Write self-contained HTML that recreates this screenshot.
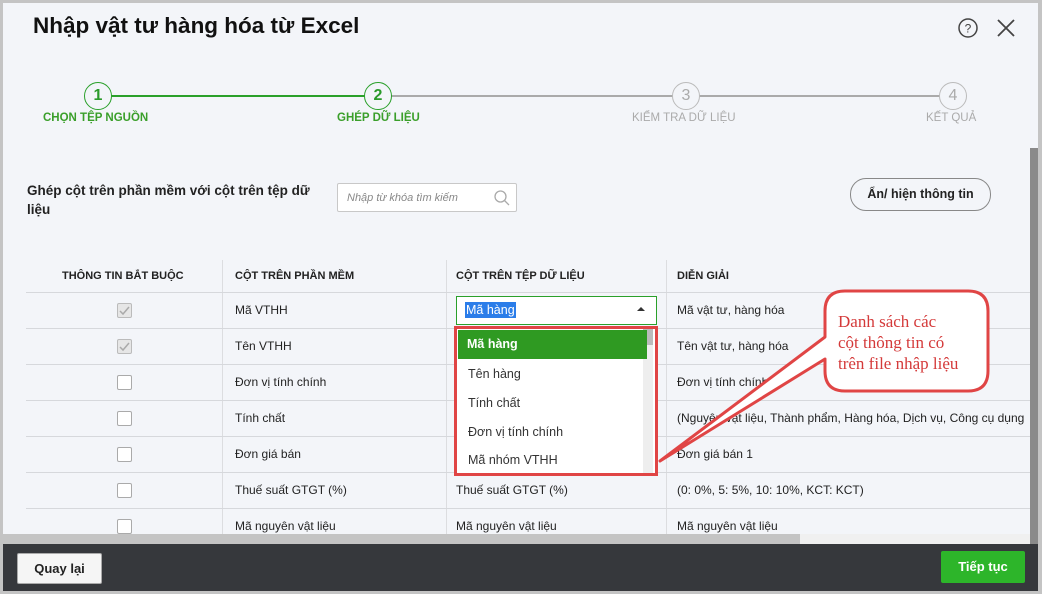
<!DOCTYPE html>
<html><head><meta charset="utf-8"><style>
*{box-sizing:border-box;margin:0;padding:0}
body{width:1042px;height:594px;overflow:hidden;background:#c4c4c4;font-family:"Liberation Sans",sans-serif;position:relative}
.a{position:absolute}
#dlg{position:absolute;left:3px;top:3px;width:1035px;height:588px;background:#f3f5f9;overflow:hidden}
.t{white-space:nowrap}
.cell{font-size:12px;color:#222}
.hd{font-size:11px;font-weight:bold;color:#222}
.hl{height:1px;background:#d6d8dc;left:23px;width:1004px}
.vl{width:1px;background:#dcdde0}
.cb{width:15px;height:15px;border:1px solid #aaa;background:#fff;border-radius:2px}
.cb.on{background:#e6e6e6;border-color:#bbb}
.circ{width:28px;height:28px;border-radius:50%;border:1.5px solid #2aa02a;background:#f3f5f9;font-size:16px;font-weight:bold;color:#2a9a2a;text-align:center;line-height:25px}
.circ.g{border-color:#bbb;color:#aaa;font-weight:normal}
.sl{font-size:11.5px;font-weight:bold;color:#3a9f2a}
.sl.g{color:#aaa;font-weight:normal}
.dd{font-size:12.5px;color:#333;left:4px;width:186px;height:29px;line-height:29px;padding-left:7px}
</style></head><body>
<div id="dlg">
<div class="a t" style="left:30px;top:10px;font-size:22.5px;font-weight:bold;color:#111">Nhập vật tư hàng hóa từ Excel</div>
<svg class="a" style="left:954px;top:14px" width="22" height="22"><circle cx="11" cy="11" r="9" fill="none" stroke="#444" stroke-width="1.5"/><text x="11" y="15.5" text-anchor="middle" font-size="12" font-family="Liberation Sans" fill="#444">?</text></svg>
<svg class="a" style="left:993px;top:15px" width="20" height="20"><path d="M2 2L18 18M18 2L2 18" stroke="#444" stroke-width="1.8"/></svg>
<!-- stepper -->
<div class="a" style="left:96px;top:92px;width:280px;height:2px;background:#2aa02a"></div>
<div class="a" style="left:376px;top:92px;width:575px;height:2px;background:#aaa"></div>
<div class="a circ" style="left:81px;top:79px">1</div>
<div class="a circ" style="left:361px;top:79px">2</div>
<div class="a circ g" style="left:669px;top:79px">3</div>
<div class="a circ g" style="left:936px;top:79px">4</div>
<div class="a t sl" style="left:40px;top:109px">CHỌN TỆP NGUỒN</div>
<div class="a t sl" style="left:334px;top:109px">GHÉP DỮ LIỆU</div>
<div class="a t sl g" style="left:629px;top:109px">KIỂM TRA DỮ LIỆU</div>
<div class="a t sl g" style="left:923px;top:109px">KẾT QUẢ</div>
<!-- toolbar -->
<div class="a" style="left:24px;top:178px;font-size:13.5px;font-weight:bold;color:#222;line-height:19px;width:300px">Ghép cột trên phần mềm với cột trên tệp dữ liệu</div>
<div class="a" style="left:334px;top:180px;width:180px;height:29px;border:1px solid #c8c8c8;background:#fff;border-radius:2px"></div>
<div class="a t" style="left:344px;top:189px;font-size:11px;font-style:italic;color:#888">Nhập từ khóa tìm kiếm</div>
<svg class="a" style="left:490px;top:186px" width="18" height="18"><circle cx="7.5" cy="7.5" r="5.5" fill="none" stroke="#aaa" stroke-width="1.3"/><path d="M11.5 11.5L16 16" stroke="#aaa" stroke-width="1.3"/></svg>
<div class="a" style="left:847px;top:175px;width:141px;height:33px;border:1px solid #888;border-radius:16px;text-align:center;line-height:31px;font-size:12.5px;font-weight:bold;color:#222">Ẩn/ hiện thông tin</div>
<!-- table -->
<div class="a vl" style="left:219px;top:257px;height:283px"></div>
<div class="a vl" style="left:443px;top:257px;height:283px"></div>
<div class="a vl" style="left:663px;top:257px;height:283px"></div>
<div class="a hl" style="top:289px"></div>
<div class="a hl" style="top:325px"></div>
<div class="a hl" style="top:361px"></div>
<div class="a hl" style="top:397px"></div>
<div class="a hl" style="top:433px"></div>
<div class="a hl" style="top:469px"></div>
<div class="a hl" style="top:505px"></div>
<div class="a t hd" style="left:59px;top:267px">THÔNG TIN BẮT BUỘC</div>
<div class="a t hd" style="left:232px;top:267px">CỘT TRÊN PHẦN MỀM</div>
<div class="a t hd" style="left:453px;top:267px">CỘT TRÊN TỆP DỮ LIỆU</div>
<div class="a t hd" style="left:674px;top:267px">DIỄN GIẢI</div>
<div class="a cb on" style="left:114px;top:300px"><svg width="13" height="13"><path d="M2 7L5 10L11 3" fill="none" stroke="#aaa" stroke-width="1.5"/></svg></div>
<div class="a cb on" style="left:114px;top:336px"><svg width="13" height="13"><path d="M2 7L5 10L11 3" fill="none" stroke="#aaa" stroke-width="1.5"/></svg></div>
<div class="a cb" style="left:114px;top:372px"></div>
<div class="a cb" style="left:114px;top:408px"></div>
<div class="a cb" style="left:114px;top:444px"></div>
<div class="a cb" style="left:114px;top:480px"></div>
<div class="a cb" style="left:114px;top:516px"></div>
<div class="a t cell" style="left:232px;top:300px">Mã VTHH</div>
<div class="a t cell" style="left:232px;top:336px">Tên VTHH</div>
<div class="a t cell" style="left:232px;top:372px">Đơn vị tính chính</div>
<div class="a t cell" style="left:232px;top:408px">Tính chất</div>
<div class="a t cell" style="left:232px;top:444px">Đơn giá bán</div>
<div class="a t cell" style="left:232px;top:480px">Thuế suất GTGT (%)</div>
<div class="a t cell" style="left:232px;top:516px">Mã nguyên vật liệu</div>
<div class="a t cell" style="left:453px;top:480px">Thuế suất GTGT (%)</div>
<div class="a t cell" style="left:453px;top:516px">Mã nguyên vật liệu</div>
<div class="a t cell" style="left:674px;top:300px">Mã vật tư, hàng hóa</div>
<div class="a t cell" style="left:674px;top:336px">Tên vật tư, hàng hóa</div>
<div class="a t cell" style="left:674px;top:372px">Đơn vị tính chính</div>
<div class="a t cell" style="left:674px;top:408px">(Nguyên vật liệu, Thành phẩm, Hàng hóa, Dịch vụ, Công cụ dụng</div>
<div class="a t cell" style="left:674px;top:444px">Đơn giá bán 1</div>
<div class="a t cell" style="left:674px;top:480px">(0: 0%, 5: 5%, 10: 10%, KCT: KCT)</div>
<div class="a t cell" style="left:674px;top:516px">Mã nguyên vật liệu</div>
<!-- combo -->
<div class="a" style="left:453px;top:293px;width:201px;height:29px;border:1.5px solid #2aa02a;background:#fff"></div>
<div class="a t" style="left:462px;top:299px;font-size:12.5px;color:#fff;background:#2b7de9;padding:0 1px;line-height:16px">Mã hàng</div>
<svg class="a" style="left:634px;top:303px" width="8" height="6"><path d="M0 5L4 1L8 5Z" fill="#333"/></svg>
<!-- dropdown -->
<div class="a" style="left:451px;top:323px;width:204px;height:150px;border:3px solid #e04545;background:#fff">
<div class="a" style="left:186px;top:0;width:10px;height:144px;background:#eee"></div>
<div class="a" style="left:186px;top:0;width:10px;height:16px;background:#bbb"></div>
<div class="a dd" style="top:1px;background:#2f9a22;color:#fff;font-weight:bold;left:1px;width:189px;padding-left:9px">Mã hàng</div>
<div class="a dd" style="top:31px">Tên hàng</div>
<div class="a dd" style="top:60px">Tính chất</div>
<div class="a dd" style="top:89px">Đơn vị tính chính</div>
<div class="a dd" style="top:117px">Mã nhóm VTHH</div>
</div>
<!-- callout -->
<svg class="a" style="left:0;top:0" width="1036" height="591">
<path d="M842 288 L965 288 Q985 288 985 308 L985 368 Q985 388 965 388 L842 388 Q822 388 822 368 L822 356 L657 458 L822 334 L822 308 Q822 288 842 288 Z" fill="#fff" stroke="#e04545" stroke-width="3" stroke-linejoin="round"/>
<text font-family="Liberation Serif" font-size="17" fill="#d43a3a"><tspan x="835" y="324">Danh sách các</tspan><tspan x="835" y="345">cột thông tin có</tspan><tspan x="835" y="366">trên file nhập liệu</tspan></text>
</svg>
<!-- scrollbars -->
<div class="a" style="left:1027px;top:145px;width:9px;height:396px;background:#8a8a8a"></div>
<div class="a" style="left:0;top:531px;width:1027px;height:10px;background:#f0f0f0"></div>
<div class="a" style="left:0;top:531px;width:797px;height:10px;background:#c4c4c4"></div>
<!-- footer -->
<div class="a" style="left:0;top:541px;width:1036px;height:50px;background:#36383c"></div>
<div class="a" style="left:14px;top:550px;width:85px;height:31px;border:1px solid #aaa;border-radius:2px;background:#f5f5f5;text-align:center;line-height:29px;font-size:13px;font-weight:bold;color:#222">Quay lại</div>
<div class="a" style="left:938px;top:548px;width:84px;height:32px;border-radius:2px;background:#2db52a;text-align:center;line-height:32px;font-size:13px;font-weight:bold;color:#fff">Tiếp tục</div>
</div>
</body></html>
